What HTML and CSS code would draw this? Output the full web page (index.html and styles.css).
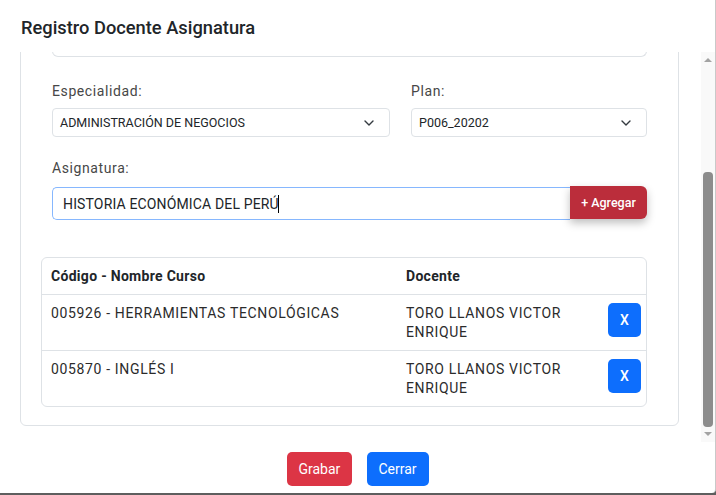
FILE: index.html
```html
<!DOCTYPE html>
<html lang="es">
<head>
<meta charset="utf-8">
<title>Registro Docente Asignatura</title>
<link rel="stylesheet" href="styles.css">
</head>
<body>
<div class="modal">
  <header class="modal-header">
    <h5 class="modal-title">Registro Docente Asignatura</h5>
  </header>
  <div class="modal-body">
    <div class="viewport">
      <div class="card">
        <div class="prev-field"></div>
        <div class="form-grid">
          <div class="field">
            <label class="lbl">Especialidad:</label>
            <div class="select">
              <span>ADMINISTRACIÓN DE NEGOCIOS</span>
              <svg class="chev" width="10" height="6" viewBox="0 0 10 6"><path d="M1 1l4 4 4-4" fill="none" stroke="#343a40" stroke-width="1.4" stroke-linecap="round" stroke-linejoin="round"/></svg>
            </div>
          </div>
          <div class="field">
            <label class="lbl">Plan:</label>
            <div class="select">
              <span>P006_20202</span>
              <svg class="chev" width="10" height="6" viewBox="0 0 10 6"><path d="M1 1l4 4 4-4" fill="none" stroke="#343a40" stroke-width="1.4" stroke-linecap="round" stroke-linejoin="round"/></svg>
            </div>
          </div>
        </div>
        <div class="field asign">
          <label class="lbl">Asignatura:</label>
          <div class="input-group">
            <div class="input"><span>HISTORIA ECONÓMICA DEL PERÚ</span><span class="caret"></span></div>
            <button class="btn-add">+ Agregar</button>
          </div>
        </div>
        <div class="table">
          <div class="tr th">
            <div class="td">Código - Nombre Curso</div>
            <div class="td">Docente</div>
            <div class="td"></div>
          </div>
          <div class="tr">
            <div class="td">005926 - HERRAMIENTAS TECNOLÓGICAS</div>
            <div class="td">TORO LLANOS VICTOR ENRIQUE</div>
            <div class="td act"><button class="btn-x">X</button></div>
          </div>
          <div class="tr last">
            <div class="td">005870 - INGLÉS I</div>
            <div class="td">TORO LLANOS VICTOR ENRIQUE</div>
            <div class="td act"><button class="btn-x">X</button></div>
          </div>
        </div>
      </div>
    </div>
    <div class="scrollbar">
      <div class="sb-btn"><span class="tri-up"></span></div>
      <div class="sb-track"><div class="sb-thumb"></div></div>
      <div class="sb-btn"><span class="tri-down"></span></div>
    </div>
  </div>
  <footer class="modal-footer">
    <button class="btn btn-red">Grabar</button>
    <button class="btn btn-blue">Cerrar</button>
  </footer>
</div>
</body>
</html>
```

FILE: styles.css
```css
* { box-sizing: border-box; }
html, body { margin: 0; padding: 0; }
body {
  background: #5e5e5e;
  font-family: Roboto, "Liberation Sans", Arial, sans-serif;
  color: #212529;
  width: 716px;
  height: 495px;
  overflow: hidden;
}
.modal {
  width: 716px;
  height: 493px;
  background: #fff;
  border-right: 1px solid #c9c9c9;
  border-bottom-right-radius: 4px;
  display: flex;
  flex-direction: column;
  overflow: hidden;
}
.modal-header {
  height: 52px;
  flex: none;
  padding: 17px 21px 0;
}
.modal-title {
  margin: 0;
  font-size: 18.3px;
  font-weight: 500;
  line-height: 22px;
  color: #212529;
}
.modal-body {
  height: 390px;
  flex: none;
  display: flex;
}
.viewport {
  width: 701px;
  overflow: hidden;
  padding: 0 22px 0 20px;
}
.card {
  margin-top: -60px;
  border: 1px solid #dee2e6;
  border-radius: 6px;
  padding: 0 31px 18px 20px;
}
.prev-field {
  height: 64px;
  margin-left: 11px;
  border: 1px solid #dee2e6;
  border-top: none;
  border-radius: 0 0 6px 6px;
}
.form-grid {
  margin-top: 24px;
  margin-left: 11px;
  display: grid;
  grid-template-columns: 338px 1fr;
  column-gap: 21px;
}
.lbl {
  display: block;
  font-size: 14px;
  line-height: 20px;
  letter-spacing: 0.6px;
  color: #474747;
}
.select {
  margin-top: 7px;
  height: 29px;
  border: 1px solid #dee2e6;
  border-radius: 4px;
  display: flex;
  align-items: center;
  justify-content: space-between;
  padding: 0 15px 0 7px;
  font-size: 12.5px;
  color: #212529;
}
.chev { display: block; }
.asign {
  margin-top: 21px;
  margin-left: 11px;
}
.input-group {
  margin-top: 8px;
  display: flex;
  align-items: flex-start;
}
.input {
  flex: 1;
  height: 33px;
  margin-top: 1px;
  border: 1px solid #86b7fe;
  border-right: none;
  border-radius: 5px 0 0 5px;
  display: flex;
  align-items: center;
  padding-left: 10px;
  font-size: 14px;
  letter-spacing: 0.15px;
  color: #212529;
}
.caret {
  display: inline-block;
  width: 1px;
  height: 18px;
  background: #000;
  margin-left: -1px;
}
.btn-add {
  width: 77px;
  height: 33px;
  border: none;
  border-radius: 0 6px 6px 0;
  background: #bb2d3b;
  color: #fff;
  font-family: inherit;
  font-size: 12.5px;
  font-weight: 500;
  box-shadow: 0 4px 8px rgba(0,0,0,0.25);
  padding: 0;
}
.table {
  margin-top: 37px;
  border: 1px solid #dee2e6;
  border-radius: 6px;
  font-size: 14px;
  letter-spacing: 0.65px;
  color: #2b2b2b;
}
.tr {
  display: grid;
  grid-template-columns: 355px 203px 1fr;
  border-bottom: 1px solid #dee2e6;
}
.tr.last { border-bottom: none; }
.td {
  padding: 9px 9px 8px;
  line-height: 19px;
}
.th .td {
  font-weight: 700;
  font-size: 14px;
  letter-spacing: 0.3px;
  color: #212529;
  padding: 8px 9px 8px;
  line-height: 20px;
}
.act {
  display: flex;
  align-items: flex-start;
  justify-content: flex-end;
  padding: 8px 5px 0 0;
}
.btn-x {
  width: 33px;
  height: 34px;
  border: none;
  border-radius: 5px;
  background: #0d6efd;
  color: #fff;
  font-family: inherit;
  font-size: 14px;
  font-weight: 500;
  padding: 0;
}
.scrollbar {
  width: 14px;
  background: #f9f9f9;
  display: flex;
  flex-direction: column;
}
.sb-btn {
  height: 16px;
  display: flex;
  align-items: center;
  justify-content: center;
}
.tri-up {
  width: 0; height: 0;
  border-left: 4px solid transparent;
  border-right: 4px solid transparent;
  border-bottom: 4px solid #a3a3a3;
}
.tri-down {
  width: 0; height: 0;
  border-left: 4px solid transparent;
  border-right: 4px solid transparent;
  border-top: 4px solid #a3a3a3;
}
.sb-track {
  flex: 1;
  padding: 0 2px;
}
.sb-thumb {
  margin-top: 104px;
  height: 255px;
  background: #8c8c8c;
  border-radius: 4px;
}
.modal-footer {
  flex: 1;
  display: flex;
  justify-content: center;
  align-items: flex-start;
  gap: 15px;
  padding-top: 10px;
}
.btn {
  height: 34px;
  border: none;
  border-radius: 5px;
  color: #fff;
  font-family: inherit;
  font-size: 14px;
  padding: 0 12px;
}
.btn-red { background: #dc3545; width: 65px; }
.btn-blue { background: #0d6efd; width: 62px; }
```
